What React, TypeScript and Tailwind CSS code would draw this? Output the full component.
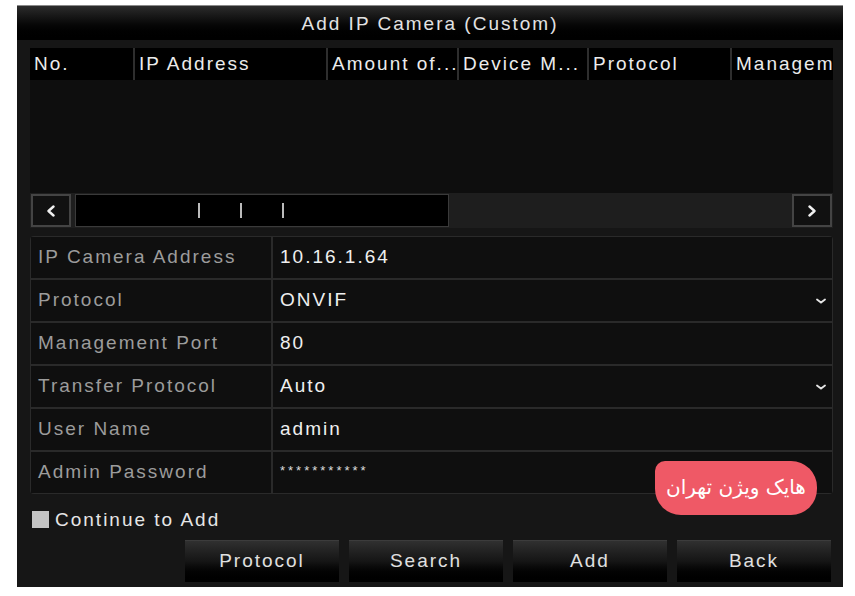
import React from "react";

const columns = [
  { label: "No.", w: "w-[103px]" },
  { label: "IP Address", w: "w-[193px]" },
  { label: "Amount of...", w: "w-[131px]" },
  { label: "Device M...", w: "w-[130px]" },
  { label: "Protocol", w: "w-[143px]" },
  { label: "Management Port", w: "flex-1" },
];

const fields = [
  { label: "IP Camera Address", value: "10.16.1.64" },
  { label: "Protocol", value: "ONVIF", select: true },
  { label: "Management Port", value: "80" },
  { label: "Transfer Protocol", value: "Auto", select: true },
  { label: "User Name", value: "admin" },
  { label: "Admin Password", value: "***********", password: true },
];

const buttons = ["Protocol", "Search", "Add", "Back"];

const Chevron = () => (
  <svg width="10" height="6" viewBox="0 0 10 6" className="mr-[6px]">
    <path d="M1 1.5 L5 4.5 L9 1.5" stroke="#e5e5e5" strokeWidth="1.8" fill="none" strokeLinecap="round" />
  </svg>
);

const Arrow = ({ dir }: { dir: "left" | "right" }) => (
  <svg width="10" height="12" viewBox="0 0 10 12">
    <path
      d={dir === "left" ? "M7.5 1.5 L2.5 6 L7.5 10.5" : "M2.5 1.5 L7.5 6 L2.5 10.5"}
      stroke="#f0f0f0"
      strokeWidth="2.4"
      fill="none"
      strokeLinecap="round"
      strokeLinejoin="round"
    />
  </svg>
);

const App = () => {
  return (
    <div className="relative w-[855px] h-[596px] bg-white overflow-hidden font-['Liberation_Sans',Arial,sans-serif]">
      <div className="ml-[17px] mt-[5px] w-[826px] h-[582px] bg-[#161616] border-t border-[#8a8a8a] flex flex-col">
        {/* title */}
        <div className="h-[34px] shrink-0 flex items-center justify-center bg-gradient-to-b from-[#2c2c2c] via-[#0a0a0a] to-black text-[19px] leading-none tracking-[2px] text-[#e2e2e2]">
          Add IP Camera (Custom)
        </div>

        <div className="pl-[13px] pr-[10px] pt-[8px] flex flex-col">
          {/* table */}
          <div className="h-[180px] bg-[#0e0e0e] flex flex-col">
            <div className="h-[32px] flex bg-black overflow-hidden">
              {columns.map((c, i) => (
                <div
                  key={c.label}
                  className={`${c.w} shrink-0 h-full flex items-center pl-[4px] text-[19px] tracking-[2px] text-[#ececec] whitespace-nowrap overflow-hidden ${i > 0 ? "border-l-2 border-[#2e2e2e]" : ""}`}
                >
                  {c.label}
                </div>
              ))}
            </div>
            <div className="flex-1" />
            <div className="h-[35px] bg-[#1e1e1e] flex items-center px-[1px] gap-[4px]">
              <div className="w-[40px] h-[33px] border-2 border-[#444] bg-[#111] flex items-center justify-center">
                <Arrow dir="left" />
              </div>
              <div className="w-[374px] h-[33px] bg-black border border-[#3a3a3a] flex items-center">
                <div className="ml-[122px] flex gap-[40px]">
                  <span className="w-[2px] h-[15px] bg-[#bbb]" />
                  <span className="w-[2px] h-[15px] bg-[#bbb]" />
                  <span className="w-[2px] h-[15px] bg-[#bbb]" />
                </div>
              </div>
              <div className="flex-1" />
              <div className="w-[40px] h-[33px] border-2 border-[#444] bg-[#111] flex items-center justify-center">
                <Arrow dir="right" />
              </div>
            </div>
          </div>

          {/* form */}
          <div className="mt-[8px] rounded-[4px] bg-[#2a2a2a] p-[1px] flex flex-col gap-[2px]">
            {fields.map((f) => (
              <div key={f.label} className="h-[41px] flex gap-[2px]">
                <div className="w-[240px] bg-[#0f0f0f] flex items-center pl-[7px] text-[19px] tracking-[2px] text-[#9c9c9c]">
                  {f.label}
                </div>
                <div className={`flex-1 bg-[#0f0f0f] flex justify-between pl-[7px] ${f.password ? "items-start pt-[9px]" : "items-center"}`}>
                  <span className={f.password ? "text-[13px] text-[#ddd] tracking-[3px]" : "text-[19px] tracking-[2px] text-[#efefef]"}>
                    {f.value}
                  </span>
                  {f.select && <Chevron />}
                </div>
              </div>
            ))}
          </div>

          {/* checkbox */}
          <div className="mt-[14px] h-[22px] flex items-center gap-[6px] pl-[2px]">
            <span className="w-[17px] h-[17px] bg-[#c4c4c4]" />
            <span className="text-[19px] leading-none tracking-[2px] text-[#e6e6e6]">Continue to Add</span>
          </div>

          {/* buttons */}
          <div className="mt-[10px] flex justify-end gap-[10px] pr-[2px]">
            {buttons.map((b) => (
              <div
                key={b}
                className="w-[154px] h-[42px] flex items-center justify-center text-[19px] tracking-[2px] text-[#e0e0e0] bg-gradient-to-b from-[#303030] via-[#151515] to-black border-t border-[#3c3c3c]"
              >
                {b}
              </div>
            ))}
          </div>
        </div>
      </div>

      {/* watermark badge */}
      <div
        dir="rtl"
        className="absolute left-[655px] top-[461px] w-[162px] h-[54px] pb-[2px] bg-[#ef5966] rounded-[26px] rounded-tl-[10px] flex items-center justify-center text-white text-[20px] font-['DejaVu_Sans',sans-serif]"
      >
        هایک ویژن تهران
      </div>
    </div>
  );
};

export default App;
